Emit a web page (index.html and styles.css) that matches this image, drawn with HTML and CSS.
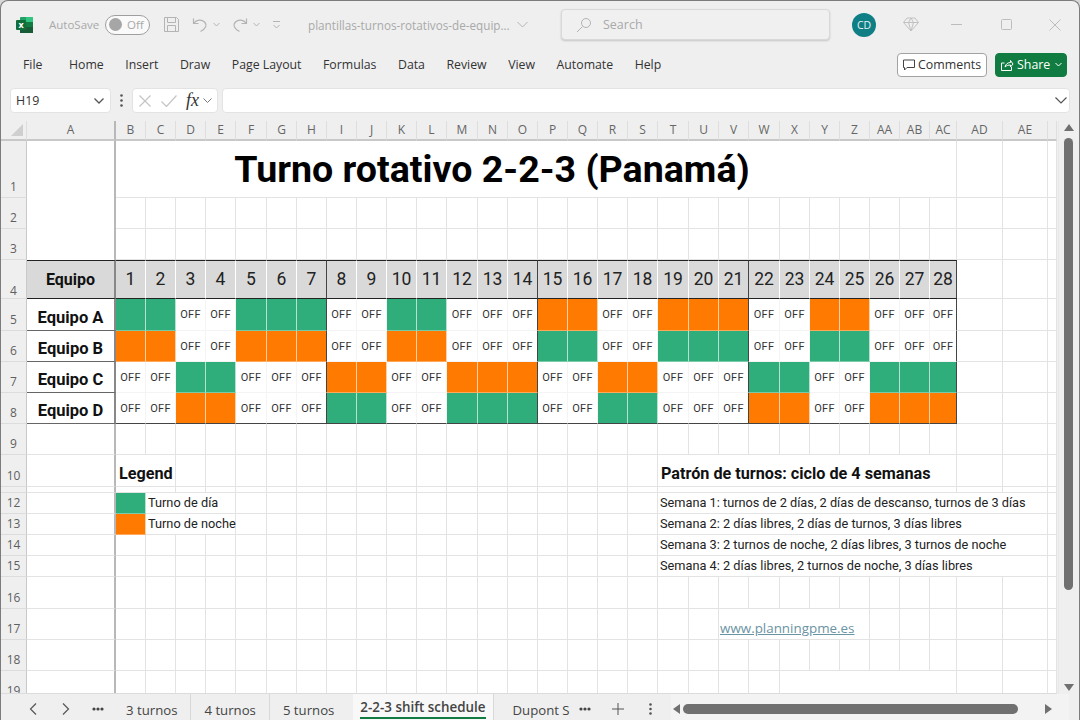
FILE: index.html
```html
<!DOCTYPE html>
<html lang="es">
<head>
  <meta charset="UTF-8">
  <title>Turno rotativo 2-2-3</title>
  <link rel="stylesheet" href="styles.css">
</head>
<body>
<div class="window">

  <!-- barra de titulo -->
  <div class="titlebar">
    <svg class="logo" width="18" height="18" viewBox="0 0 18 18"><rect x="4" y="1" width="13" height="16" rx="1" fill="#21a366"/><rect x="10" y="1" width="7" height="5" fill="#33c481"/><rect x="4" y="11" width="13" height="6" fill="#185c37"/><rect x="10" y="6" width="7" height="5" fill="#107c41"/><rect x="0" y="4" width="10" height="10" rx="1" fill="#0f6e3a"/><text x="5" y="12" text-anchor="middle" class="logo-x">x</text></svg>
    <span class="autosave">AutoSave</span>
    <span class="toggle"><i></i>Off</span>
    <svg class="qa-save" width="17" height="17" viewBox="0 0 17 17" fill="none" stroke="#b4b4b4"><path d="M1.5 1.5h12l2 2v12h-14z"/><path d="M4.5 1.5v5h8v-5M4.5 15.5v-6h8v6"/></svg>
    <svg class="qa-undo" width="16" height="16" viewBox="0 0 16 16" fill="none" stroke="#b4b4b4" stroke-width="1.2"><path d="M1.5 1.5v5h5M1.5 6.5c3-4 8-4.5 11-1.5 3 3 1 7-4 9.5"/></svg>
    <svg class="chev-sm" width="7" height="5" viewBox="0 0 7 5" fill="none" stroke="#b4b4b4"><path d="M.5 1l3 3 3-3"/></svg>
    <svg class="qa-redo" width="16" height="16" viewBox="0 0 16 16" fill="none" stroke="#b4b4b4" stroke-width="1.2"><path d="M14.5 1.5v5h-5M14.5 6.5c-3-4-8-4.5-11-1.5-3 3-1 7 4 9.5"/></svg>
    <svg class="chev-sm" width="7" height="5" viewBox="0 0 7 5" fill="none" stroke="#b4b4b4"><path d="M.5 1l3 3 3-3"/></svg>
    <svg class="qa-more" width="9" height="9" viewBox="0 0 9 9" fill="none" stroke="#b4b4b4"><path d="M1 1.5h7M1.5 5l3 3 3-3"/></svg>
    <span class="docname">plantillas-turnos-rotativos-de-equip...</span>
    <svg class="doc-chev" width="11" height="7" viewBox="0 0 11 7" fill="none" stroke="#b4b4b4"><path d="M.5 1l5 5 5-5"/></svg>
    <div class="search">
      <svg width="16" height="16" viewBox="0 0 16 16" fill="none" stroke="#b4b4b4"><circle cx="10" cy="6" r="4.5"/><path d="M6.5 9.5L1 15"/></svg>
      <span>Search</span>
    </div>
    <span class="avatar">CD</span>
    <svg class="diamond" width="16" height="15" viewBox="0 0 16 15" fill="none" stroke="#c2c2c2"><path d="M4 1h8l3.5 4.5L8 14 .5 5.5zM.5 5.5h15M5.5 5.5L8 14l2.5-8.5L8 1 5.500 5.5"/></svg>
    <svg class="win-min" width="11" height="1" viewBox="0 0 11 1"><rect width="11" height="1" fill="#bdbdbd"/></svg>
    <svg class="win-max" width="11" height="11" viewBox="0 0 11 11" fill="none" stroke="#bdbdbd"><rect x=".5" y=".5" width="10" height="10" rx="1"/></svg>
    <svg class="win-close" width="12" height="12" viewBox="0 0 12 12" fill="none" stroke="#bdbdbd"><path d="M.5.5l11 11M11.5.5l-11 11"/></svg>
  </div>

  <!-- menu -->
  <div class="ribbon">
    <span class="tab-file">File</span>
    <nav class="menu">
      <span>Home</span><span>Insert</span><span>Draw</span><span>Page Layout</span><span>Formulas</span><span>Data</span><span>Review</span><span>View</span><span>Automate</span><span>Help</span>
    </nav>
    <button class="btn-comments">
      <svg width="14" height="14" viewBox="0 0 14 14" fill="none" stroke="#444"><path d="M1.5 2h11v7.5H5L2.5 12V9.5h-1z"/></svg>
      Comments
    </button>
    <button class="btn-share">
      <svg width="14" height="14" viewBox="0 0 14 14" fill="none" stroke="#fff"><path d="M4.5 5H1.5v7.5h10V9M5 9c.5-3 3-4.5 5.5-4.5V2.5L13 6l-2.5 3V7C8.5 7 6.5 7.5 5 9z"/></svg>
      Share
      <svg class="share-chev" width="7" height="5" viewBox="0 0 7 5" fill="none" stroke="#fff"><path d="M.5 1l3 3 3-3"/></svg>
    </button>
  </div>

  <!-- barra de formulas -->
  <div class="formula-bar">
    <div class="namebox">H19
      <svg width="10" height="6" viewBox="0 0 10 6" fill="none" stroke="#555" stroke-width="1.3"><path d="M.5.5l4.5 4.5 4.5-4.5"/></svg>
    </div>
    <svg class="fb-dots" width="3" height="13" viewBox="0 0 3 13" fill="#555"><circle cx="1.5" cy="1.5" r="1.3"/><circle cx="1.5" cy="6.5" r="1.3"/><circle cx="1.5" cy="11.5" r="1.3"/></svg>
    <div class="fb-tools">
      <svg width="12" height="12" viewBox="0 0 12 12" fill="none" stroke="#c4c4c4" stroke-width="1.2"><path d="M.5.5l11 11M11.5.5l-11 11"/></svg>
      <svg class="fb-check" width="16" height="12" viewBox="0 0 16 12" fill="none" stroke="#c4c4c4" stroke-width="1.2"><path d="M.5 6.5L5.5 11.5 15.5.5"/></svg>
      <em>fx</em>
      <svg width="9" height="5" viewBox="0 0 9 5" fill="none" stroke="#777"><path d="M.5.5l4 4 4-4"/></svg>
    </div>
    <div class="fb-input">
      <svg width="12" height="7" viewBox="0 0 12 7" fill="none" stroke="#555" stroke-width="1.2"><path d="M.5.5l5.5 5.5 5.5-5.5"/></svg>
    </div>
  </div>

  <!-- hoja -->
  <div class="sheet">
    <div class="grid-wrap">
      <table class="grid">
        <colgroup>
          <col class="c-rh"><col class="c-a">
          <col class="c-d"><col class="c-d"><col class="c-d"><col class="c-d"><col class="c-e"><col class="c-d"><col class="c-d">
          <col class="c-d"><col class="c-d"><col class="c-d"><col class="c-d"><col class="c-e"><col class="c-d"><col class="c-d">
          <col class="c-d"><col class="c-d"><col class="c-d"><col class="c-d"><col class="c-e"><col class="c-d"><col class="c-d">
          <col class="c-e"><col class="c-d"><col class="c-d"><col class="c-d"><col class="c-d"><col class="c-d"><col class="c-z">
          <col class="c-ad"><col class="c-ae"><col class="c-af">
        </colgroup>
        <thead>
          <tr class="letters">
            <th class="corner"><svg width="12" height="12" viewBox="0 0 12 12"><path d="M12 0v12H0z" fill="#cfcfcf"/></svg></th>
            <th class="frz">A</th>
            <th>B</th><th>C</th><th>D</th><th>E</th><th>F</th><th>G</th><th>H</th><th>I</th><th>J</th><th>K</th><th>L</th><th>M</th><th>N</th><th>O</th><th>P</th><th>Q</th><th>R</th><th>S</th><th>T</th><th>U</th><th>V</th><th>W</th><th>X</th><th>Y</th><th>Z</th><th>AA</th><th>AB</th><th>AC</th><th>AD</th><th>AE</th><th></th>
          </tr>
        </thead>
        <tbody>
          <tr class="r1">
            <th>1</th><td class="frz no-line" rowspan="3"></td>
            <td class="title" colspan="28">Turno rotativo 2-2-3 (Panamá)</td>
            <td></td><td></td><td></td>
          </tr>
          <tr class="r31">
            <th>2</th>
            <td></td><td></td><td></td><td></td><td></td><td></td><td></td><td></td><td></td><td></td><td></td><td></td><td></td><td></td><td></td><td></td><td></td><td></td><td></td><td></td><td></td><td></td><td></td><td></td><td></td><td></td><td></td><td></td>
            <td></td><td></td><td></td>
          </tr>
          <tr class="r31">
            <th>3</th>
            <td></td><td></td><td></td><td></td><td></td><td></td><td></td><td></td><td></td><td></td><td></td><td></td><td></td><td></td><td></td><td></td><td></td><td></td><td></td><td></td><td></td><td></td><td></td><td></td><td></td><td></td><td></td><td></td>
            <td></td><td></td><td></td>
          </tr>
          <tr class="r4">
            <th>4</th>
            <td class="frz n team-head">Equipo</td>
            <td class="n">1</td><td class="n">2</td><td class="n">3</td><td class="n">4</td><td class="n">5</td><td class="n">6</td><td class="n w">7</td>
            <td class="n">8</td><td class="n">9</td><td class="n">10</td><td class="n">11</td><td class="n">12</td><td class="n">13</td><td class="n w">14</td>
            <td class="n">15</td><td class="n">16</td><td class="n">17</td><td class="n">18</td><td class="n">19</td><td class="n">20</td><td class="n w">21</td>
            <td class="n">22</td><td class="n">23</td><td class="n">24</td><td class="n">25</td><td class="n">26</td><td class="n">27</td><td class="n w">28</td>
            <td></td><td></td><td></td>
          </tr>
          <tr class="r32">
            <th>5</th>
            <td class="frz team">Equipo A</td>
            <td class="g"></td><td class="g"></td><td class="f">OFF</td><td class="f">OFF</td><td class="g"></td><td class="g"></td><td class="g w"></td>
            <td class="f">OFF</td><td class="f">OFF</td><td class="g"></td><td class="g"></td><td class="f">OFF</td><td class="f">OFF</td><td class="f w">OFF</td>
            <td class="o"></td><td class="o"></td><td class="f">OFF</td><td class="f">OFF</td><td class="o"></td><td class="o"></td><td class="o w"></td>
            <td class="f">OFF</td><td class="f">OFF</td><td class="o"></td><td class="o"></td><td class="f">OFF</td><td class="f">OFF</td><td class="f w">OFF</td>
            <td></td><td></td><td></td>
          </tr>
          <tr class="r31">
            <th>6</th>
            <td class="frz team">Equipo B</td>
            <td class="o"></td><td class="o"></td><td class="f">OFF</td><td class="f">OFF</td><td class="o"></td><td class="o"></td><td class="o w"></td>
            <td class="f">OFF</td><td class="f">OFF</td><td class="o"></td><td class="o"></td><td class="f">OFF</td><td class="f">OFF</td><td class="f w">OFF</td>
            <td class="g"></td><td class="g"></td><td class="f">OFF</td><td class="f">OFF</td><td class="g"></td><td class="g"></td><td class="g w"></td>
            <td class="f">OFF</td><td class="f">OFF</td><td class="g"></td><td class="g"></td><td class="f">OFF</td><td class="f">OFF</td><td class="f w">OFF</td>
            <td></td><td></td><td></td>
          </tr>
          <tr class="r31">
            <th>7</th>
            <td class="frz team">Equipo C</td>
            <td class="f">OFF</td><td class="f">OFF</td><td class="g"></td><td class="g"></td><td class="f">OFF</td><td class="f">OFF</td><td class="f w">OFF</td>
            <td class="o"></td><td class="o"></td><td class="f">OFF</td><td class="f">OFF</td><td class="o"></td><td class="o"></td><td class="o w"></td>
            <td class="f">OFF</td><td class="f">OFF</td><td class="o"></td><td class="o"></td><td class="f">OFF</td><td class="f">OFF</td><td class="f w">OFF</td>
            <td class="g"></td><td class="g"></td><td class="f">OFF</td><td class="f">OFF</td><td class="g"></td><td class="g"></td><td class="g w"></td>
            <td></td><td></td><td></td>
          </tr>
          <tr class="r31 end">
            <th>8</th>
            <td class="frz team">Equipo D</td>
            <td class="f">OFF</td><td class="f">OFF</td><td class="o"></td><td class="o"></td><td class="f">OFF</td><td class="f">OFF</td><td class="f w">OFF</td>
            <td class="g"></td><td class="g"></td><td class="f">OFF</td><td class="f">OFF</td><td class="g"></td><td class="g"></td><td class="g w"></td>
            <td class="f">OFF</td><td class="f">OFF</td><td class="g"></td><td class="g"></td><td class="f">OFF</td><td class="f">OFF</td><td class="f w">OFF</td>
            <td class="o"></td><td class="o"></td><td class="f">OFF</td><td class="f">OFF</td><td class="o"></td><td class="o"></td><td class="o w"></td>
            <td></td><td></td><td></td>
          </tr>
          <tr class="r31">
            <th>9</th>
            <td class="frz"></td>
            <td></td><td></td><td></td><td></td><td></td><td></td><td></td><td></td><td></td><td></td><td></td><td></td><td></td><td></td><td></td><td></td><td></td><td></td><td></td><td></td><td></td><td></td><td></td><td></td><td></td><td></td><td></td><td></td>
            <td></td><td></td><td></td>
          </tr>
          <tr class="r32">
            <th>10</th>
            <td class="frz"></td>
            <td class="heading" colspan="2">Legend</td>
            <td></td><td></td><td></td><td></td><td></td><td></td><td></td><td></td><td></td><td></td><td></td><td></td><td></td><td></td><td></td><td></td>
            <td class="heading" colspan="10">Patrón de turnos: ciclo de 4 semanas</td>
            <td></td><td></td><td></td>
          </tr>
          <tr class="r6">
            <th></th>
            <td class="frz"></td>
            <td colspan="2"></td>
            <td></td><td></td><td></td><td></td><td></td><td></td><td></td><td></td><td></td><td></td><td></td><td></td><td></td><td></td><td></td><td></td>
            <td colspan="10"></td>
            <td></td><td></td><td></td>
          </tr>
          <tr class="r21">
            <th>12</th>
            <td class="frz"></td>
            <td class="g"></td>
            <td class="label" colspan="3">Turno de día</td>
            <td></td><td></td><td></td><td></td><td></td><td></td><td></td><td></td><td></td><td></td><td></td><td></td><td></td><td></td>
            <td class="label" colspan="12">Semana 1: turnos de 2 días, 2 días de descanso, turnos de 3 días</td>
            <td></td>
          </tr>
          <tr class="r21">
            <th>13</th>
            <td class="frz"></td>
            <td class="o"></td>
            <td class="label" colspan="3">Turno de noche</td>
            <td></td><td></td><td></td><td></td><td></td><td></td><td></td><td></td><td></td><td></td><td></td><td></td><td></td><td></td>
            <td class="label" colspan="12">Semana 2: 2 días libres, 2 días de turnos, 3 días libres</td>
            <td></td>
          </tr>
          <tr class="r21">
            <th>14</th>
            <td class="frz"></td>
            <td></td><td></td><td></td><td></td><td></td><td></td><td></td><td></td><td></td><td></td><td></td><td></td><td></td><td></td><td></td><td></td><td></td><td></td>
            <td class="label" colspan="12">Semana 3: 2 turnos de noche, 2 días libres, 3 turnos de noche</td>
            <td></td>
          </tr>
          <tr class="r21">
            <th>15</th>
            <td class="frz"></td>
            <td></td><td></td><td></td><td></td><td></td><td></td><td></td><td></td><td></td><td></td><td></td><td></td><td></td><td></td><td></td><td></td><td></td><td></td>
            <td class="label" colspan="12">Semana 4: 2 días libres, 2 turnos de noche, 3 días libres</td>
            <td></td>
          </tr>
          <tr class="r32">
            <th>16</th>
            <td class="frz"></td>
            <td></td><td></td><td></td><td></td><td></td><td></td><td></td><td></td><td></td><td></td><td></td><td></td><td></td><td></td><td></td><td></td><td></td><td></td><td></td><td></td><td></td><td></td><td></td><td></td><td></td><td></td><td></td><td></td>
            <td></td><td></td><td></td>
          </tr>
          <tr class="r31">
            <th>17</th>
            <td class="frz"></td>
            <td></td><td></td><td></td><td></td><td></td><td></td><td></td><td></td><td></td><td></td><td></td><td></td><td></td><td></td><td></td><td></td><td></td><td></td><td></td><td></td>
            <td class="link" colspan="5"><a href="#">www.planningpme.es</a></td>
            <td></td><td></td><td></td>
            <td></td><td></td><td></td>
          </tr>
          <tr class="r31">
            <th>18</th>
            <td class="frz"></td>
            <td></td><td></td><td></td><td></td><td></td><td></td><td></td><td></td><td></td><td></td><td></td><td></td><td></td><td></td><td></td><td></td><td></td><td></td><td></td><td></td><td></td><td></td><td></td><td></td><td></td><td></td><td></td><td></td>
            <td></td><td></td><td></td>
          </tr>
          <tr class="r31">
            <th>19</th>
            <td class="frz"></td>
            <td></td><td></td><td></td><td></td><td></td><td></td><td></td><td></td><td></td><td></td><td></td><td></td><td></td><td></td><td></td><td></td><td></td><td></td><td></td><td></td><td></td><td></td>
            <td colspan="6"></td>
            <td></td><td></td><td></td>
          </tr>
        </tbody>
      </table>
    </div>
    <div class="vbar">
      <svg width="10" height="7" viewBox="0 0 10 7"><path d="M5 0l5 7H0z" fill="#707070"/></svg>
      <div class="vthumb"></div>
      <svg class="vdown" width="10" height="7" viewBox="0 0 10 7"><path d="M5 7L0 0h10z" fill="#707070"/></svg>
    </div>
  </div>

  <!-- pestañas -->
  <div class="tabs">
    <svg class="nav-prev" width="8" height="12" viewBox="0 0 8 12" fill="none" stroke="#555" stroke-width="1.2"><path d="M7 .5L1.5 6 7 11.5"/></svg>
    <svg class="nav-next" width="8" height="12" viewBox="0 0 8 12" fill="none" stroke="#555" stroke-width="1.2"><path d="M1 .5L6.5 6 1 11.5"/></svg>
    <svg class="dots-l" width="12" height="4" viewBox="0 0 12 4" fill="#444"><circle cx="2" cy="2" r="1.6"/><circle cx="6" cy="2" r="1.6"/><circle cx="10" cy="2" r="1.6"/></svg>
    <span class="tab t1 first">3 turnos</span>
    <span class="tab t1">4 turnos</span>
    <span class="tab t2">5 turnos</span>
    <span class="tab active"><b>2-2-3 shift schedule</b></span>
    <span class="tab clipped">Dupont Schedule</span>
    <svg class="dots-r" width="12" height="4" viewBox="0 0 12 4" fill="#444"><circle cx="2" cy="2" r="1.6"/><circle cx="6" cy="2" r="1.6"/><circle cx="10" cy="2" r="1.6"/></svg>
    <svg class="add" width="12" height="12" viewBox="0 0 12 12" stroke="#555"><path d="M6 0v12M0 6h12"/></svg>
    <svg class="kebab" width="3" height="12" viewBox="0 0 3 12" fill="#555"><circle cx="1.5" cy="1.5" r="1.3"/><circle cx="1.5" cy="6" r="1.3"/><circle cx="1.5" cy="10.5" r="1.3"/></svg>
    <div class="hbar">
      <svg width="7" height="10" viewBox="0 0 7 10"><path d="M0 5l7-5v10z" fill="#707070"/></svg>
      <div class="hthumb"></div>
      <svg width="7" height="10" viewBox="0 0 7 10"><path d="M7 5L0 0v10z" fill="#707070"/></svg>
    </div>
  </div>

</div>
</body>
</html>
```

FILE: styles.css
```css
* {
  box-sizing: border-box;
}

body {
  margin: 0;
  background-color: #d8d8d8;
  font-family: "Open Sans", "Noto Sans", sans-serif;
}

.window {
  width: 1080px;
  height: 720px;
  display: flex;
  flex-direction: column;
  overflow: hidden;
  background-color: #efefef;
  border: 1px solid #7c7c7c;
  border-bottom: none;
  border-radius: 8px 8px 0 0;
}

/* barra de titulo */
.titlebar {
  height: 45px;
  flex: none;
  display: flex;
  align-items: center;
  padding-top: 2px;
  color: #a9a9a9;
  font-size: 11.5px;
}

.logo {
  margin-left: 15px;
}

.logo-x {
  fill: #fff;
  font: bold 9px "Open Sans", sans-serif;
}

.autosave {
  margin-left: 15px;
  width: 50px;
  white-space: nowrap;
}

.toggle {
  margin-left: 6px;
  width: 45px;
  height: 20px;
  display: flex;
  align-items: center;
  gap: 5px;
  padding-left: 3px;
  border: 1px solid #9f9f9f;
  border-radius: 10px;
  background-color: #fafafa;
}

.toggle i {
  width: 13px;
  height: 13px;
  border-radius: 50%;
  background-color: #a6a6a6;
}

.qa-save {
  margin-left: 13px;
}

.qa-undo {
  margin-left: 12px;
}

.chev-sm {
  margin-left: 5px;
}

.qa-redo {
  margin-left: 12px;
}

.qa-more {
  margin-left: 12px;
}

.docname {
  margin-left: 27px;
  width: 205px;
  white-space: nowrap;
  font-size: 11.7px;
}

.doc-chev {
  margin-left: 4px;
}

.search {
  margin-left: 33px;
  width: 269px;
  height: 31px;
  display: flex;
  align-items: center;
  gap: 11px;
  padding-left: 14px;
  border: 1px solid #d9d9d9;
  border-radius: 4px;
  box-shadow: 0 1px 2px rgba(0, 0, 0, 0.18);
  font-size: 12.5px;
  background-color: #f0f0f0;
}

.avatar {
  margin-left: 22px;
  width: 24px;
  height: 24px;
  display: flex;
  align-items: center;
  justify-content: center;
  border-radius: 50%;
  background-color: #0f7f85;
  color: #e8f4f4;
  font-size: 10.5px;
}

.diamond {
  margin-left: 27px;
}

.win-min {
  margin-left: 32px;
}

.win-max {
  margin-left: 39px;
}

.win-close {
  margin-left: 37px;
}

/* menu */
.ribbon {
  height: 40px;
  flex: none;
  display: flex;
  align-items: center;
  padding-bottom: 3px;
  color: #333;
  font-size: 12.3px;
}

.tab-file {
  margin-left: 22px;
  width: 46px;
}

.menu {
  display: flex;
  gap: 21.5px;
  width: 828px;
}

.menu span {
  white-space: nowrap;
}

.ribbon button {
  height: 24px;
  display: flex;
  align-items: center;
  font-family: inherit;
  font-size: 12.4px;
  border-radius: 4px;
  padding: 0 0 0 4px;
}

.btn-comments {
  width: 90px;
  gap: 2px;
  background-color: #fff;
  border: 1px solid #a2a2a2;
  color: #333;
}

.btn-share {
  margin-left: 8px;
  width: 72px;
  gap: 3px;
  background-color: #107c41;
  border: 1px solid #107c41;
  color: #fff;
}

.share-chev {
  margin-left: 2px;
}

/* barra de formulas */
.formula-bar {
  height: 35px;
  flex: none;
  display: flex;
  align-items: flex-start;
  padding: 2px 9px 0;
}

.namebox,
.fb-tools,
.fb-input {
  height: 25px;
  display: flex;
  align-items: center;
  background-color: #fff;
  border: 1px solid #e3e3e3;
  border-radius: 4px;
}

.namebox {
  width: 101px;
  justify-content: space-between;
  padding: 0 6px 0 5px;
  font-size: 12.4px;
  color: #333;
}

.fb-dots {
  margin: 6px 9px 0 9px;
}

.fb-tools {
  width: 86px;
  padding-left: 6px;
}

.fb-check {
  margin-left: 10px;
}

.fb-tools em {
  margin: 0 4px 0 9px;
  font: italic 18px "Liberation Serif", serif;
  color: #333;
}

.fb-input {
  margin-left: 4px;
  width: 848px;
  justify-content: flex-end;
  padding-right: 2px;
}

/* hoja */
.sheet {
  height: 573px;
  flex: none;
  display: flex;
}

.grid-wrap {
  width: 1056px;
  height: 573px;
  overflow: hidden;
  background-color: #fff;
  border-bottom: 1px solid #dcdcdc;
}

.grid {
  width: 1056px;
  table-layout: fixed;
  border-collapse: separate;
  border-spacing: 0;
  font-family: Roboto, sans-serif;
  color: #111;
}

.c-rh { width: 26px; }
.c-a { width: 89px; }
.c-d { width: 30px; }
.c-e { width: 31px; }
.c-z { width: 27px; }
.c-ad { width: 46px; }
.c-ae { width: 45px; }
.c-af { width: 9px; }

.grid td {
  padding: 0;
  line-height: 1;
  white-space: nowrap;
  border-right: 1px solid #e3e3e3;
  border-bottom: 1px solid #e3e3e3;
  background-color: #fff;
}

.grid th {
  padding: 0 0 1px;
  font-family: "Open Sans", sans-serif;
  font-weight: 400;
  font-size: 12px;
  color: #5f5f5f;
  background-color: #efefef;
  border-right: 1px solid #c9c9c9;
  border-bottom: 1px solid #dcdcdc;
  vertical-align: bottom;
  line-height: 18px;
}

.letters th {
  height: 20px;
  padding: 0;
  vertical-align: middle;
  border-right: 1px solid #dedede;
  border-bottom: 2px solid #c8c8c8;
  line-height: 1;
  color: #666;
}

.corner svg {
  display: block;
  margin-left: 10px;
}

.r1 td, .r1 th { height: 57px; }
.r4 td, .r4 th { height: 39px; }
.r31 td, .r31 th { height: 31px; }
.r32 td, .r32 th { height: 32px; }
.r6 td, .r6 th { height: 6px; padding: 0; line-height: 0; }
.r21 td, .r21 th { height: 21px; }

.grid .r4 th {
  padding: 0;
  line-height: 14px;
}

/* linea de inmovilizar paneles */
.grid .frz,
.letters .frz {
  border-right: 2px solid #b8b8b8;
}

.grid .no-line {
  border-bottom: none;
}

.grid .title {
  padding: 1px 88px 0 0;
  text-align: center;
  font-size: 37.6px;
  font-weight: 700;
  color: #000;
}

.grid .n {
  text-align: center;
  font-size: 17.5px;
  color: #222;
  background-color: #d9d9d9;
  border-top: 1px solid #222;
  border-bottom: 1px solid #222;
  border-right: 1px solid #fff;
}

.grid .team-head {
  font-size: 16px;
  font-weight: 700;
  color: #111;
  border-right: 2px solid #888;
}

.grid .team {
  text-align: center;
  vertical-align: bottom;
  padding-bottom: 4px;
  font-size: 16.5px;
  font-weight: 700;
  border-bottom: 1px solid #666;
  border-right: 2px solid #888;
}

.grid .g {
  background-color: #2fae7b;
  border-right-color: rgba(255, 255, 255, 0.65);
  border-bottom-color: rgba(255, 255, 255, 0.35);
}

.grid .o {
  background-color: #ff7a00;
  border-right-color: rgba(255, 255, 255, 0.65);
  border-bottom-color: rgba(255, 255, 255, 0.35);
}

.grid .f {
  text-align: center;
  font-size: 11px;
  letter-spacing: 0.2px;
  color: #333;
  border-right-color: #f4f4f4;
  border-bottom-color: #f4f4f4;
}

.grid .w {
  border-right: 1px solid #444;
}

.end .g,
.end .o,
.end .f {
  border-bottom: 1px solid #444 !important;
}

.grid .heading {
  vertical-align: bottom;
  padding: 0 0 4px 3px;
  font-size: 16.2px;
  font-weight: 700;
}

.grid .label {
  padding: 1px 0 0 2px;
  font-size: 12.75px;
  color: #222;
}

.grid .link {
  vertical-align: bottom;
  padding: 0 0 4px 1px;
  font-family: "Open Sans", sans-serif;
  font-size: 13.4px;
}

.link a {
  color: #6a93a3;
}

/* scroll vertical */
.vbar {
  flex: 1;
  display: flex;
  flex-direction: column;
  align-items: center;
  padding: 3px 1px 3px 0;
  margin-left: 1px;
  border-left: 1px solid #e8e8e8;
}

.vthumb {
  width: 9px;
  height: 452px;
  margin-top: 7px;
  background-color: #707070;
  border-radius: 5px;
}

.vdown {
  margin-top: auto;
}

/* pestañas */
.tabs {
  height: 26px;
  flex: none;
  display: flex;
  align-items: center;
  font-size: 13.2px;
  color: #444;
}

.tabs > svg {
  margin-top: 4px;
}

.nav-prev {
  margin-left: 28px;
}

.nav-next {
  margin-left: 25px;
}

.dots-l {
  margin-left: 22px;
}

.tab {
  height: 26px;
  display: flex;
  align-items: center;
  padding-top: 5px;
  white-space: nowrap;
}

.t1 {
  padding-left: 13px;
  padding-right: 13px;
  border-right: 1px solid #d8d8d8;
}

.first {
  margin-left: 9px;
}

.t2 {
  padding-left: 13px;
  padding-right: 14px;
}

.active {
  margin-left: 5px;
  padding: 0 7px;
  align-items: flex-start;
  background-color: #f8f8f8;
  border-right: 1px solid #d8d8d8;
}

.active b {
  margin-top: 4px;
  padding-bottom: 1px;
  font-size: 13.4px;
  font-weight: 600;
  line-height: 18px;
  border-bottom: 2px solid #107c41;
}

.clipped {
  width: 57px;
  margin-left: 19px;
  overflow: hidden;
}

.dots-r {
  margin-left: 9px;
}

.add {
  margin-left: 21px;
}

.kebab {
  margin-left: 25px;
}

.hbar {
  margin-left: 19px;
  width: 398px;
  height: 26px;
  display: flex;
  align-items: center;
  padding: 4px 0 0 2px;
  background-color: #f3f3f3;
}

.hthumb {
  margin-left: 3px;
  margin-right: 27px;
  width: 335px;
  height: 10px;
  border-radius: 5px;
  background-color: #707070;
}
```
